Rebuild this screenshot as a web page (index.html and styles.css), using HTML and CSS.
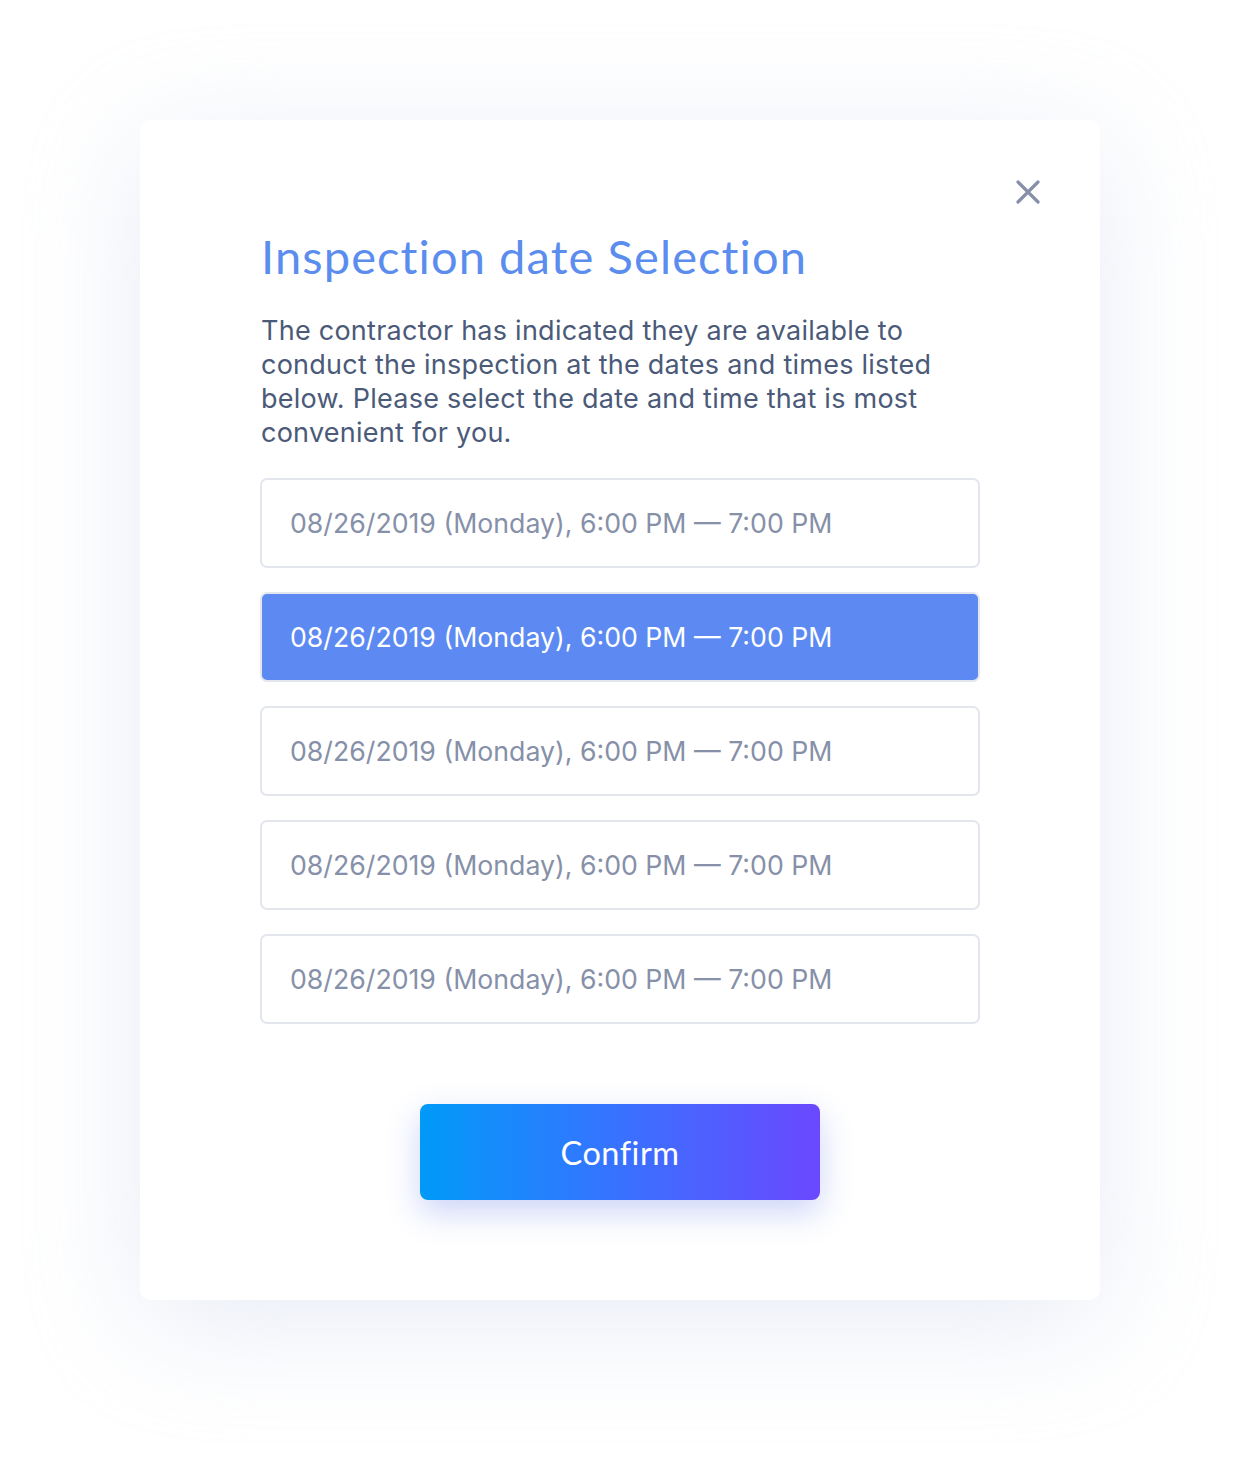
FILE: index.html
```html
<!DOCTYPE html>
<html>
<head>
<meta charset="utf-8">
<link rel="stylesheet" href="styles.css">
</head>
<body>
<div class="page">
  <div class="card">
    <button class="close" aria-label="Close">
      <svg width="26" height="26" viewBox="0 0 26 26"><path d="M3 3L23 23M23 3L3 23" stroke="#8790a8" stroke-width="3.2" stroke-linecap="round"/></svg>
    </button>
    <h1 class="title">Inspection date Selection</h1>
    <p class="desc">The contractor has indicated they are available to conduct the inspection at the dates and times listed below. Please select the date and time that is most convenient for you.</p>
    <div class="options">
      <div class="option">08/26/2019 (Monday), 6:00 PM — 7:00 PM</div>
      <div class="option selected">08/26/2019 (Monday), 6:00 PM — 7:00 PM</div>
      <div class="option">08/26/2019 (Monday), 6:00 PM — 7:00 PM</div>
      <div class="option">08/26/2019 (Monday), 6:00 PM — 7:00 PM</div>
      <div class="option">08/26/2019 (Monday), 6:00 PM — 7:00 PM</div>
    </div>
    <div class="actions">
      <button class="confirm">Confirm</button>
    </div>
  </div>
</div>
</body>
</html>
```
FILE: styles.css
```css
* { box-sizing: border-box; }
html, body { margin: 0; padding: 0; background: #ffffff; }
body { font-family: "Inter", "Lato", sans-serif; width: 1240px; height: 1460px; overflow: hidden; }
.page { padding: 120px 140px; }
.card {
  position: relative;
  width: 960px;
  height: 1180px;
  background: #fff;
  border-radius: 10px;
  box-shadow: 0 24px 120px rgba(205, 212, 235, 0.45);
  padding: 104px 120px 0 120px;
}
.close {
  position: absolute;
  top: 59px;
  right: 59px;
  width: 26px;
  height: 26px;
  padding: 0;
  border: 0;
  background: none;
  display: flex;
}
.title {
  margin: 0 0 26px 1px;
  font-family: "Lato", sans-serif;
  font-weight: 400;
  font-size: 47px;
  line-height: 64px;
  color: #5b8def;
  letter-spacing: 1.1px;
}
.desc {
  margin: 0 0 28px 1px;
  font-size: 27px;
  line-height: 34px;
  color: #4b5a78;
  letter-spacing: 0.25px;
  width: 690px;
}
.options { display: flex; flex-direction: column; gap: 24px; }
.option {
  height: 90px;
  border: 2px solid #e3e6ed;
  border-radius: 7px;
  padding: 0 28px;
  display: flex;
  align-items: center;
  font-size: 26.7px;
  color: #8690a8;
}
.option.selected { background: #5c8af2; color: #fff; border-color: #e3e6ed; }
.actions { display: flex; justify-content: center; margin-top: 80px; }
.confirm {
  width: 400px;
  height: 96px;
  border: 0;
  border-radius: 8px;
  background: linear-gradient(90deg, #009af8 0%, #3376ff 45%, #6b48ff 100%);
  color: #fff;
  font-family: "Lato", sans-serif;
  font-size: 32.5px;
  letter-spacing: 0.5px;
  box-shadow: 0 12px 32px rgba(70, 100, 230, 0.28);
}
```
